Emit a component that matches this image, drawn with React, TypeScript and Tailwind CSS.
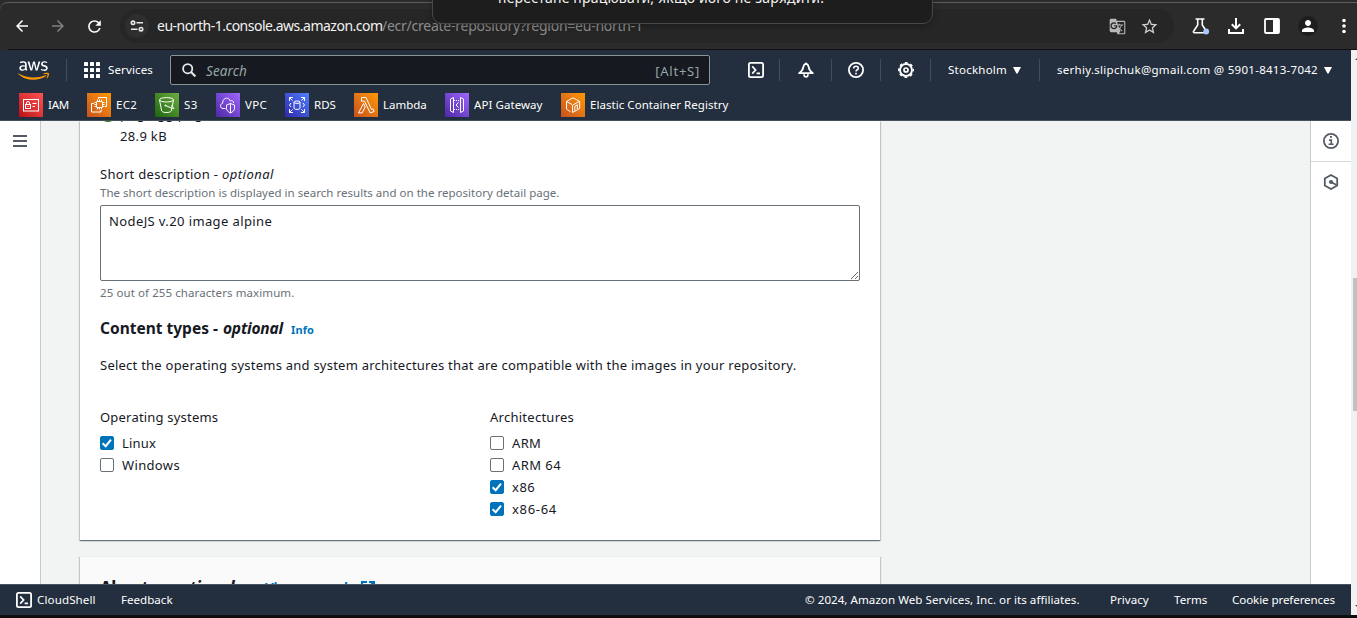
import type { ReactNode } from "react";
import { FaAws } from "react-icons/fa";
import { MdArrowBack, MdArrowForward, MdGTranslate, MdPerson, MdRefresh, MdStarBorder } from "react-icons/md";

function Toolbar() {
  return (
    <div className="flex h-[50px] items-center border-b border-[#0f1112] bg-[#2b2b2b] pt-[3px]">
      <MdArrowBack className="ml-[13px] size-[18px] shrink-0 text-white" />
      <MdArrowForward className="ml-[18px] size-[18px] shrink-0 text-[#808080]" />
      <MdRefresh className="ml-[18px] size-[19px] shrink-0 text-white" />
      <div className="ml-[16px] flex h-[34px] w-[1054px] shrink-0 items-center rounded-full bg-[#262626] pl-[5px] pr-[15px]">
        <span className="flex size-[24px] items-center justify-center rounded-full bg-[#2e2e2e]">
          <svg viewBox="0 0 14 12" className="h-[12px] w-[14px]" fill="none" stroke="#e8e8e8" strokeWidth="1.6">
            <circle cx="3" cy="2.8" r="1.7" />
            <path d="M6.5 2.8H13M1 9.2H7.5" />
            <circle cx="11" cy="9.2" r="1.7" />
          </svg>
        </span>
        <span className="ml-[8px] flex whitespace-nowrap text-[14px] leading-[20px]">
          <span className="w-[225px] tracking-[-0.5px] text-[#f2f2f2]">eu-north-1.console.aws.amazon.com</span>
          <span className="tracking-[-0.25px] text-[#8e8e8e]">/ecr/create-repository?region=eu-north-1</span>
        </span>
        <MdGTranslate className="ml-auto size-[17px] text-[#b9b9b9]" />
        <MdStarBorder className="ml-[14px] size-[19px] text-[#d0d0d0]" />
      </div>
      <svg viewBox="0 0 18 18" className="ml-[18px] size-[18px] shrink-0" fill="none" stroke="#fff" strokeWidth="1.6">
        <path d="M3.5 2h9M5.7 2v6L1.6 14.2a1 1 0 0 0 .8 1.6h11.2a1 1 0 0 0 .8-1.6L10.3 8V2" />
        <circle cx="14.2" cy="14.5" r="2.9" fill="#a8c7fa" stroke="none" />
      </svg>
      <svg viewBox="0 0 18 18" className="ml-[17px] size-[18px] shrink-0" fill="none" stroke="#fff" strokeWidth="2">
        <path d="M9 1v10M4.8 7.2 9 11.4l4.2-4.2M2 12v4h14v-4" />
      </svg>
      <svg viewBox="0 0 16 16" className="ml-[19px] size-[16px] shrink-0">
        <path d="M2 1h12q1 0 1 1v12q0 1-1 1H2q-1 0-1-1V2q0-1 1-1" fill="none" stroke="#fff" strokeWidth="1.8" />
        <path d="M9 1h6v14H9z" fill="#fff" />
      </svg>
      <span className="ml-[18px] flex size-[20px] shrink-0 items-center justify-center rounded-full bg-[#1d1f1f]">
        <MdPerson className="size-[18px] text-white" />
      </span>
      <svg viewBox="0 0 4 16" className="ml-[24px] h-[16px] w-[4px] shrink-0" fill="#fff">
        <circle cx="2" cy="2.5" r="1.8" />
        <circle cx="2" cy="8" r="1.8" />
        <circle cx="2" cy="13.5" r="1.8" />
      </svg>
    </div>
  );
}

function Divider({ className }: { className: string }) {
  return <span className={`h-[22px] w-px shrink-0 bg-[#414d5c] ${className}`} />;
}

function Terminal() {
  return (
    <svg viewBox="0 0 16 16" className="size-[16px] shrink-0" fill="none" stroke="#fff" strokeWidth="1.8">
      <rect x="0.9" y="0.9" width="14.2" height="14.2" rx="1.6" />
      <path d="M4.2 4.4 7.6 8l-3.4 3.6M8.6 11.3h3.4" strokeWidth="1.7" />
    </svg>
  );
}

function Caret({ className }: { className: string }) {
  return (
    <svg viewBox="0 0 8 7" className={`h-[7px] w-[8px] shrink-0 ${className}`}>
      <path d="M0 0h8L4.6 6.5H3.4z" fill="#fff" />
    </svg>
  );
}

function TopNav() {
  return (
    <div className="flex h-[40px] items-center whitespace-nowrap text-[11.5px] leading-[18px] text-white">
      <span className="relative ml-[18px] h-[25px] w-[31px] shrink-0">
        <FaAws className="h-[25px] w-[31px] text-white [clip-path:inset(0_0_42%_0)]" />
        <FaAws className="absolute left-0 top-0 h-[25px] w-[31px] text-[#ff9900] [clip-path:inset(58%_0_0_0)]" />
      </span>
      <Divider className="ml-[17px]" />
      <svg viewBox="0 0 16 16" className="ml-[17px] size-[16px] shrink-0" fill="#fff">
        {[0, 6, 12].map((y) => [0, 6, 12].map((x) => <rect key={`${x}-${y}`} x={x} y={y} width="4" height="4" rx=".6" />))}
      </svg>
      <span className="ml-[8px] w-[62px] tracking-[0.14px]">Services</span>
      <div className="flex h-[30px] w-[540px] shrink-0 items-center rounded-[2px] border border-[#879596] bg-[#16191f] pl-[11px] pr-[9px] text-[#95a5a6]">
        <svg viewBox="0 0 14 14" className="size-[14px]" fill="none" stroke="#e3e8e8" strokeWidth="1.8">
          <circle cx="5.7" cy="5.7" r="4.6" />
          <path d="m9 9 4.4 4.4" strokeWidth="2.1" />
        </svg>
        <span className="ml-[10px] pt-[2px] text-[13.5px] italic leading-[20px] tracking-[0.1px]">Search</span>
        <span className="ml-auto pt-[2px] text-[13px] leading-[20px] tracking-[0.75px]">[Alt+S]</span>
      </div>
      <span className="ml-[38px] flex"><Terminal /></span>
      <Divider className="ml-[15px]" />
      <svg viewBox="0 0 16 16" className="ml-[18px] size-[16px] shrink-0" fill="none" stroke="#fff" strokeWidth="1.8" strokeLinejoin="round">
        <path d="M8 1.4C6.4 2.2 5.4 3.6 5.2 5.4 5 7.6 3.4 9.6 1.2 11.2h13.6C12.6 9.6 11 7.6 10.8 5.4 10.6 3.6 9.6 2.2 8 1.4z" />
        <path d="M6 12.2q.2 2.7 2 2.7t2-2.7" />
      </svg>
      <Divider className="ml-[17px]" />
      <svg viewBox="0 0 16 16" className="ml-[16px] size-[16px] shrink-0" fill="none" stroke="#fff" strokeWidth="1.8">
        <circle cx="8" cy="8" r="7.1" />
        <path d="M5.7 6.4C5.7 3.4 10.3 3.6 10.3 6.2 10.3 7.8 8 7.7 8 9.6M8 10.8v1.7" strokeWidth="1.6" />
      </svg>
      <Divider className="ml-[16px]" />
      <svg viewBox="0 0 16 16" className="ml-[17px] size-[16px] shrink-0" fill="none" stroke="#fff">
        <circle cx="8" cy="8" r="6" strokeWidth="1.9" />
        <circle cx="8" cy="8" r="7.3" strokeWidth="1.4" strokeDasharray="2.87 2.87" strokeDashoffset="1.43" />
        <circle cx="8" cy="8" r="2" strokeWidth="1.7" />
      </svg>
      <Divider className="ml-[16px]" />
      <span className="ml-[17px] w-[59px] tracking-[0.24px]">Stockholm</span>
      <Caret className="ml-[6px]" />
      <Divider className="ml-[18px]" />
      <span className="ml-[17px] w-[261px] tracking-[0.28px]">serhiy.slipchuk@gmail.com @ 5901-8413-7042</span>
      <Caret className="ml-[6px]" />
    </div>
  );
}

const favorites: { name: string; gradient: string; box: string; icon: ReactNode }[] = [
  {
    name: "IAM",
    gradient: "from-[#bd0816] to-[#ff5252]",
    box: "w-[68px] tracking-[-0.25px]",
    icon: (
      <>
        <rect x="4.5" y="6.5" width="15" height="11.5" />
        <rect x="6.5" y="11.5" width="5" height="4" />
        <path d="M7.5 11.5V10q0-1.5 1.5-1.5t1.5 1.5v1.5M9 13v1M13.5 10.5h4M13.5 13.5h2.5" />
      </>
    ),
  },
  {
    name: "EC2",
    gradient: "from-[#c8511b] to-[#ff9900]",
    box: "w-[68px] tracking-[0.3px]",
    icon: (
      <>
        <rect x="9.5" y="8.5" width="6" height="6" rx=".5" />
        <path d="M10.5 6.5v2M12.5 6.5v2M14.5 6.5v2M10.5 14.5v2M12.5 14.5v2M14.5 14.5v2M7.5 9.5h2M7.5 11.5h2M7.5 13.5h2M15.5 9.5h2M15.5 11.5h2M15.5 13.5h2" />
        <path d="M11.5 6V4.5h8v9H18M7 10.5H4.500v8.500h9.500v-2" />
      </>
    ),
  },
  {
    name: "S3",
    gradient: "from-[#1b660f] to-[#6cae3e]",
    box: "w-[61px] tracking-[0.5px]",
    icon: (
      <>
        <ellipse cx="11.5" cy="6.8" rx="7" ry="2.2" />
        <path d="M4.5 7 6.7 18c1.2 2 8.4 2 9.6 0L18.5 7M10.5 12.5l7 3c2 .6 2.300-.8-1.300-2.800" />
        <circle cx="10.5" cy="12.5" r=".6" />
      </>
    ),
  },
  {
    name: "VPC",
    gradient: "from-[#4d27a8] to-[#a166ff]",
    box: "w-[69px] tracking-[0.3px]",
    icon: (
      <>
        <path d="M9.5 15.5H7c-3 0-3.4-4.5-.4-5.2C6.5 4.5 13 3.5 14.3 8c2-1 3.3.2 3.3 2" />
        <path d="M14.5 10.5 18.5 12v3.500c0 2-2 3.500-4 4.500-2-1-4-2.500-4-4.500V12zM14.500 10.500V20" />
      </>
    ),
  },
  {
    name: "RDS",
    gradient: "from-[#2e27ad] to-[#527fff]",
    box: "w-[69px]",
    icon: (
      <>
        <path d="M4.5 8V4.5H8M4.5 4.5l3 3M16 4.5h3.5V8M19.5 4.5l-3 3M4.5 16v3.5H8M4.5 19.5l3-3M19.5 16v3.5H16M19.5 19.5l-3-3M6 10l-1.5 2L6 14M18 10l1.5 2-1.5 2" />
        <ellipse cx="12" cy="9.2" rx="3" ry="1.2" />
        <path d="M9 9.2v6c0 1.6 6 1.6 6 0v-6" />
      </>
    ),
  },
  {
    name: "Lambda",
    gradient: "from-[#c8511b] to-[#ff9900]",
    box: "w-[91px]",
    icon: (
      <path d="M7.5 4.5H12l5.5 12 1.7-.6.9 2.7-4 1.2L10.5 8.2H7.5zM9.5 10.5l1.7 3.400-3 6H4.500z" />
    ),
  },
  {
    name: "API Gateway",
    gradient: "from-[#4d27a8] to-[#a166ff]",
    box: "w-[116px] tracking-[0.07px]",
    icon: (
      <>
        <path d="M8.5 4.5 5.5 6v12l3 1.5zM15.5 4.5l3 1.5v12l-3 1.5zM13.5 9.5l-2.5 2.5 2.5 2.5" />
        <path d="M9 7.5h6M9 16.5h6" strokeDasharray="1 1" />
      </>
    ),
  },
  {
    name: "Elastic Container Registry",
    gradient: "from-[#c8511b] to-[#ff9900]",
    box: "w-[170px] tracking-[0.05px]",
    icon: (
      <>
        <path d="M9.5 18.8 5.5 16V8.5L12 4.8l6.3 3.500M5.500 8.500l5.500 3M11.500 19.500v-7.300l7.200-4v7.300z" />
        <path d="M13.8 17.5v-4.200l2.500-1.500v4.200" />
      </>
    ),
  },
];

function Favorites() {
  return (
    <div className="flex h-[30px] items-center pl-[19px] text-[11.5px] leading-[18px] text-white">
      {favorites.map((f) => (
        <span key={f.name} className={`flex shrink-0 items-center gap-[5px] whitespace-nowrap ${f.box}`}>
          <span className={`size-[24px] shrink-0 bg-linear-to-tr ${f.gradient}`}>
            <svg viewBox="0 0 24 24" className="size-[24px]" fill="none" stroke="#fff" strokeWidth="1">
              {f.icon}
            </svg>
          </span>
          {f.name}
        </span>
      ))}
    </div>
  );
}

function Check({ label, checked, className = "" }: { label: string; checked?: boolean; className?: string }) {
  return (
    <label className={`flex h-[22px] items-center gap-[8px] leading-[22px] ${className}`}>
      <span
        className={`flex size-[14px] items-center justify-center rounded-[2px] border ${
          checked ? "border-[#0073bb] bg-[#0073bb]" : "border-[#687078] bg-white"
        }`}
      >
        {checked && (
          <svg viewBox="0 0 12 12" className="size-[12px] shrink-0" fill="none" stroke="#fff" strokeWidth="2">
            <path d="M1.6 6.3 4.7 9.2 10 2.6" />
          </svg>
        )}
      </span>
      {label}
    </label>
  );
}

function RepositoryForm() {
  return (
    <section className="flex h-[419px] w-[800px] shrink-0 flex-col overflow-hidden bg-white px-[20px]">
      <div className="-mt-[20px] flex h-[46px] shrink-0">
        <svg viewBox="0 0 16 16" className="mt-[5px] size-[16px] shrink-0" fill="none" stroke="#1d8102" strokeWidth="2">
          <circle cx="8" cy="8" r="7" />
          <path d="m5 8 2 2 4-4" />
        </svg>
        <div className="ml-[4px] tracking-[0.34px]">
          <div className="h-[22px] pt-[2px] leading-[22px]">png-egg.png</div>
          <div className="h-[22px] pt-[2px] leading-[22px]">28.9 kB</div>
        </div>
      </div>
      <div className="mt-[16px] h-[22px] leading-[22px]">
        <span className="inline-block w-[122px] tracking-[0.3px]">Short description -</span>
        <em className="tracking-[0.48px]">optional</em>
      </div>
      <p className="h-[16px] text-[11.5px] leading-[16px] tracking-[0.02px] text-[#687078]">
        The short description is displayed in search results and on the repository detail page.
      </p>
      <textarea
        readOnly
        className="mt-[4px] h-[76px] w-[760px] shrink-0 resize rounded-[2px] border border-[#687078] bg-white px-[8px] py-[4px] leading-[22px] tracking-[0.39px] outline-none"
        value="NodeJS v.20 image alpine"
      />
      <p className="mt-[4px] h-[16px] text-[11.5px] leading-[16px] tracking-[0.09px] text-[#687078]">
        25 out of 255 characters maximum.
      </p>
      <div className="mt-[16px] flex h-[22px] items-baseline text-[15.5px] font-bold leading-[22px]">
        <span className="w-[123px]">Content types -</span>
        <em className="w-[68px] tracking-[-0.2px]">optional</em>
        <a className="text-[11px] tracking-[0.1px] text-[#0073bb]">Info</a>
      </div>
      <p className="mt-[15px] h-[22px] whitespace-nowrap leading-[22px] tracking-[0.238px]">
        Select the operating systems and system architectures that are compatible with the images in your repository.
      </p>
      <div className="mt-[30px] flex leading-[22px]">
        <div className="w-[390px]">
          <div className="mb-[4px] tracking-[0.2px]">Operating systems</div>
          <Check label="Linux" checked className="tracking-[0.2px]" />
          <Check label="Windows" className="tracking-[0.35px]" />
        </div>
        <div>
          <div className="mb-[4px] tracking-[0.26px]">Architectures</div>
          <Check label="ARM" className="tracking-[0.35px]" />
          <Check label="ARM 64" className="tracking-[0.45px]" />
          <Check label="x86" checked className="tracking-[0.5px]" />
          <Check label="x86-64" checked className="tracking-[0.7px]" />
        </div>
      </div>
    </section>
  );
}

export default function App() {
  return (
    <div className="relative flex h-[618px] w-[1357px] flex-col overflow-hidden bg-[#0d0d0d] font-['Noto_Sans',sans-serif] text-[13px] text-[#16191f]">
      <div className="h-[50px] shrink-0 bg-[#2b2b2b]">
        <div className="h-[2px]" />
        <div className="-mb-[2px] h-[48px] rounded-tl-[8px] border-t border-[#5e5e5e]">
          <div className="-mt-[3px]">
            <div className="[clip-path:inset(3px_0_0_8px)]">
              <Toolbar />
            </div>
          </div>
        </div>
      </div>
      <div className="flex h-[565px] shrink-0">
        <div className="flex w-[1351px] shrink-0 flex-col">
          <header className="h-[71px] shrink-0 border-b border-[#48525f] bg-[#232f3e]">
            <TopNav />
            <Favorites />
          </header>
          <div className="flex h-[463px] shrink-0 overflow-hidden">
            <aside className="w-[41px] shrink-0 border-r border-[#c5caca] bg-white pl-[13px] pt-[14px]">
              <svg viewBox="0 0 14 12" className="h-[12px] w-[14px]" fill="#545b64">
                <path d="M0 0h14v2H0zM0 5h14v2H0zM0 10h14v2H0z" />
              </svg>
            </aside>
            <main className="flex flex-1 flex-col overflow-hidden bg-[#f2f3f3] pl-[39px]">
              <div className="w-[800px] shrink-0 shadow-[0_1px_1px_0_rgba(0,28,36,0.4),1px_1px_1px_0_rgba(0,28,36,0.16),-1px_1px_1px_0_rgba(0,28,36,0.16)]">
                <RepositoryForm />
              </div>
              <div className="mt-[16px] h-[120px] w-[800px] shrink-0 border-t border-[#eaeded] bg-[#fafafa] px-[20px] pt-[18px] shadow-[1px_1px_1px_0_rgba(0,28,36,0.2),-1px_1px_1px_0_rgba(0,28,36,0.2)]">
                <div className="flex items-center whitespace-nowrap text-[17px] font-bold leading-[26px]">
                  <span className="w-[70px] tracking-[-0.6px]">About -</span>
                  <em className="w-[95px] tracking-[-0.4px]">optional</em>
                  <a className="flex items-center gap-[6px] text-[13.5px] tracking-[-0.2px] text-[#0073bb]">
                    <span className="w-[90px]">View example</span>
                    <svg viewBox="0 0 14 14" className="size-[14px]" fill="none" stroke="#0073bb" strokeWidth="2">
                      <path d="M6 1H1v12h12V8M8 1h5v5M13 1 6 8" />
                    </svg>
                  </a>
                </div>
              </div>
            </main>
            <aside className="w-[41px] shrink-0 border-l border-[#c5caca] bg-white">
              <div className="flex h-[41px] items-center justify-center border-b border-[#d5dbdb]">
                <svg viewBox="0 0 16 16" className="size-[16px]" fill="none" stroke="#545b64" strokeWidth="1.8">
                  <circle cx="8" cy="8" r="7.1" />
                  <path d="M7 3.9h2M6 7.1h2.3v4M5.6 11.3h5" strokeWidth="1.6" />
                </svg>
              </div>
              <div className="flex h-[40px] items-center justify-center">
                <svg viewBox="0 0 16 16" className="size-[16px]" fill="none" stroke="#545b64" strokeWidth="1.8">
                  <path d="M8 1 14.2 4.5v7L8 15l-6.2-3.5v-7z" />
                  <circle cx="8" cy="8" r="2.1" fill="#545b64" stroke="none" />
                  <path d="m8 8 5.5 3" />
                </svg>
              </div>
            </aside>
          </div>
          <footer className="flex h-[31px] shrink-0 items-center whitespace-nowrap border-t border-[#48525f] bg-[#232f3e] pl-[16px] text-[11.6px] text-white">
            <Terminal />
            <span className="ml-[5px] w-[84px] tracking-[0.1px]">CloudShell</span>
            <span>Feedback</span>
            <span className="ml-auto w-[305px] tracking-[0.03px]">© 2024, Amazon Web Services, Inc. or its affiliates.</span>
            <span className="w-[64px]">Privacy</span>
            <span className="w-[58px]">Terms</span>
            <span className="w-[119px] tracking-[-0.1px]">Cookie preferences</span>
          </footer>
        </div>
        <div className="flex w-[6px] shrink-0 flex-col items-end bg-[#f1f1f1]">
          <svg viewBox="0 0 2 3" className="mt-[8px] h-[3px] w-[2px]" fill="#505050">
            <path d="M0 2 2 0v2z" />
          </svg>
          <div className="mt-[217px] h-[133px] w-[4px] bg-[#c1c1c1]" />
          <svg viewBox="0 0 2 2" className="mt-[194px] h-[2px] w-[2px]" fill="#505050">
            <path d="M0 0h2v2z" />
          </svg>
        </div>
      </div>
      <div className="absolute left-[432px] top-[-30px] flex h-[54px] w-[501px] items-center justify-center whitespace-nowrap rounded-[10px] border border-[#484848] bg-[#1d1d1d] text-[14px] text-[#f2f2f2] shadow-[0_2px_6px_rgba(0,0,0,0.3)]">
        <span className="-ml-[42px] w-[327px] pt-[2px] leading-[20px] tracking-[0.18px]">перестане працювати, якщо його не зарядити.</span>
      </div>
    </div>
  );
}
